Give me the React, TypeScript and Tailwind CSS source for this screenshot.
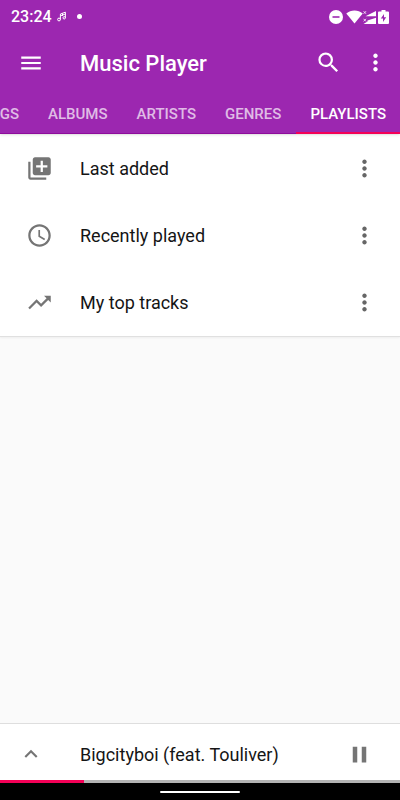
import { useState } from 'react';
import {
  MdAccessTime,
  MdExpandLess,
  MdLibraryAdd,
  MdMenu,
  MdMoreVert,
  MdPause,
  MdSearch,
  MdTrendingUp,
} from 'react-icons/md';
import clsx from 'clsx';

const tabs = ['SONGS', 'ALBUMS', 'ARTISTS', 'GENRES', 'PLAYLISTS'];

const playlists = [
  { name: 'Last added', Icon: MdLibraryAdd },
  { name: 'Recently played', Icon: MdAccessTime },
  { name: 'My top tracks', Icon: MdTrendingUp },
];

function StatusBar() {
  return (
    <div className="flex h-8 items-center px-[11px] pt-px">
      <span className="text-base font-medium">23:24</span>
      <svg className="ml-[5px] h-[11px] w-[10px]" viewBox="0 0 10 11" fill="none" stroke="currentColor" strokeWidth="1">
        <circle cx="2" cy="8.5" r="1.4" />
        <circle cx="7.2" cy="6.8" r="1.2" />
        <path d="M3.4 8.5V3L8.4 1.2V6.8M3.4 4.8L8.4 3M5.5 2.3V5" />
      </svg>
      <span className="ml-[10px] h-[5px] w-[5px] rounded-full bg-white" />
      <div className="ml-auto flex items-center">
        <svg className="h-[14px] w-[14px]" viewBox="0 0 14 14">
          <circle cx="7" cy="7" r="7" fill="#fff" />
          <path d="M3.5 7h7" stroke="#9c27b0" strokeWidth="1.6" />
        </svg>
        <svg className="ml-[3px] h-[14px] w-[17px]" viewBox="0 0 17 14" fill="#fff">
          <path d="M8.5 13.6L.3 3.6C2.6 1.6 5.4.6 8.5.6s5.9 1 8.2 3z" />
        </svg>
        <svg className="h-[14px] w-[13px]" viewBox="0 0 13 14" fill="#fff">
          <path d="M13 1v5.3H2.5zM13 7.7V14H.5l4-2.600V10.500z" />
          <path d="M.6 1.2L3 3.8M3 1.2L.6 3.8M.6 8.8L3 11.4M3 8.8L.6 11.4" stroke="#fff" strokeWidth=".8" />
        </svg>
        <svg className="ml-[2px] h-[14px] w-[11px]" viewBox="0 0 11 14">
          <path d="M3.5 0h4v1.5H10a1 1 0 0 1 1 1V13a1 1 0 0 1-1 1H1a1 1 0 0 1-1-1V2.5a1 1 0 0 1 1-1h2.5z" fill="#fff" />
          <path d="M6 4L2.8 8.5H5V12L8.2 7.3H6z" fill="#9c27b0" />
        </svg>
      </div>
    </div>
  );
}

export default function App() {
  const [activeTab, setActiveTab] = useState('PLAYLISTS');

  return (
    <div className="flex min-h-screen flex-col bg-[#fafafa] font-['Roboto',sans-serif] text-[#151515]">
      <header className="relative border-b border-[#8e0c9c] bg-[#9c27b0] text-white shadow-sm">
        <StatusBar />
        <div className="flex h-[61px] items-center pl-[18px] pr-[11px]">
          <button aria-label="Open menu">
            <MdMenu className="h-[26px] w-[26px]" />
          </button>
          <h1 className="ml-9 flex-1 pt-0.5 text-[22px] font-medium">Music Player</h1>
          <button aria-label="Search">
            <MdSearch className="h-[27px] w-[27px]" />
          </button>
          <button aria-label="More options" className="ml-5">
            <MdMoreVert className="h-[27px] w-[27px]" />
          </button>
        </div>
        <div role="tablist" className="-mb-px flex h-[41px] justify-end gap-px overflow-hidden">
          {tabs.map((tab) => (
            <button
              key={tab}
              role="tab"
              aria-selected={tab === activeTab}
              onClick={() => setActiveTab(tab)}
              className={clsx(
                'shrink-0 border-b-2 px-[14px] pt-1 text-[15px] font-medium',
                tab === activeTab ? 'border-[#f50057] text-white' : 'border-transparent text-white/70'
              )}
            >
              {tab}
            </button>
          ))}
        </div>
      </header>

      <ul className="border-b border-[#e0e0e0] bg-white pt-px shadow-xs">
        {playlists.map(({ name, Icon }) => (
          <li key={name} className="flex h-[67px] items-center pl-[26px] pr-[22px]">
            <Icon className="h-[27px] w-[27px] text-[#757575]" />
            <span className="ml-[27px] flex-1 text-[18px]">{name}</span>
            <button aria-label={`Options for ${name}`} className="text-[#666]">
              <MdMoreVert className="h-[27px] w-[27px]" />
            </button>
          </li>
        ))}
      </ul>

      <footer className="mt-auto">
        <div className="flex h-[57px] items-center border-t border-[#dedede] bg-white pl-[18px] pr-[27px] pt-1">
          <button aria-label="Expand player" className="text-[#757575]">
            <MdExpandLess className="h-[26px] w-[26px]" />
          </button>
          <span className="ml-9 flex-1 text-[18px]">Bigcityboi (feat. Touliver)</span>
          <button aria-label="Pause" className="text-[#757575]">
            <MdPause className="h-[27px] w-[27px]" />
          </button>
        </div>
        <div className="h-[3px] bg-[#b3b3b3]">
          <div className="h-full w-[21%] bg-[#f50057]" />
        </div>
        <div className="flex h-[17px] items-center justify-center bg-black">
          <div className="h-[2px] w-20 rounded-full bg-white" />
        </div>
      </footer>
    </div>
  );
}
